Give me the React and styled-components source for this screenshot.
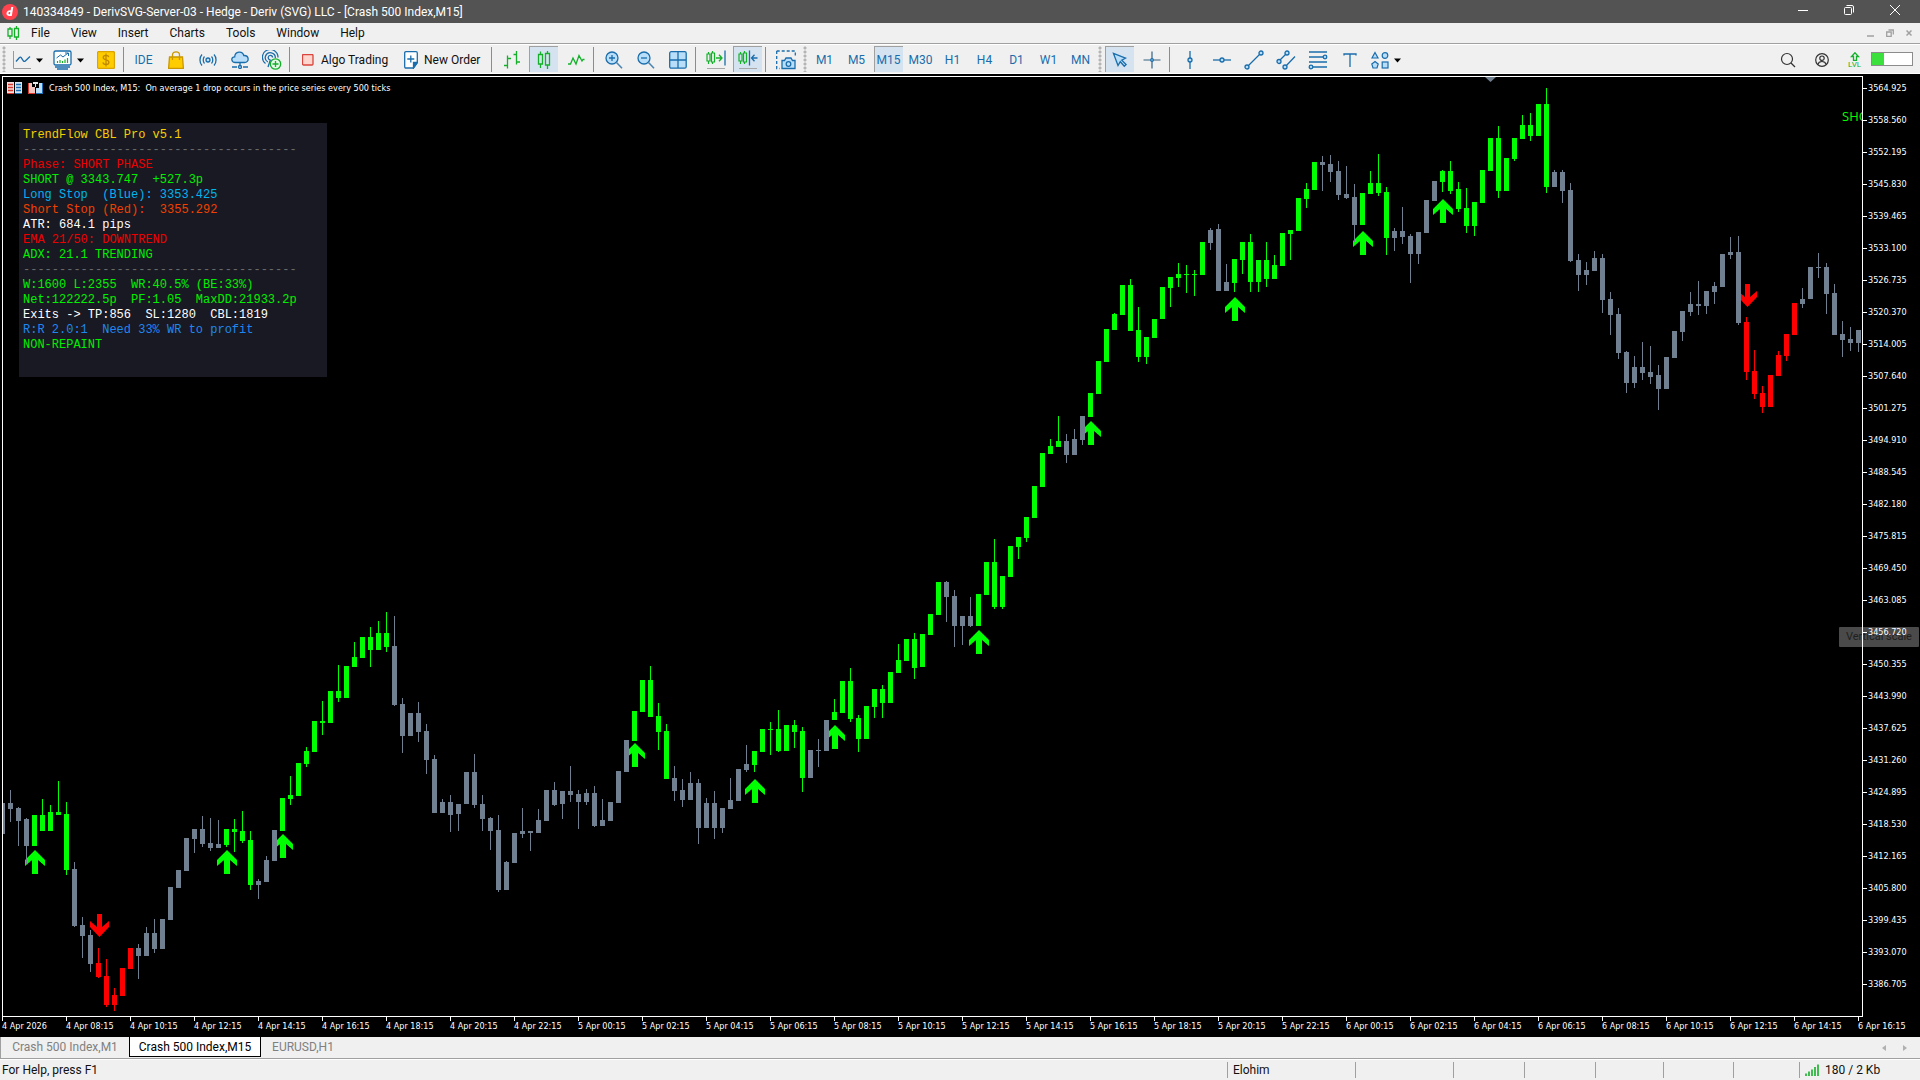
import React from "react";
import styled, { createGlobalStyle } from "styled-components";

const UI_FONT = 'Roboto, "Open Sans", sans-serif';
const CHART_FONT = '"DejaVu Sans Condensed", "DejaVu Sans", sans-serif';
const MONO_FONT = '"Liberation Mono", monospace';

const UP = "#00ff00";
const DOWN = "#ff0000";
const FLAT = "#708090";
const BLUE = "#1a6dab";
const SKY = "#b9defa";
const GREEN = "#14b02a";

const GlobalStyle = createGlobalStyle`
  * { box-sizing: border-box; }
  body { margin: 0; background: #f0f0f0; font-family: ${UI_FONT}; font-size: 12px; overflow: hidden; }
  button { font: inherit; color: inherit; background: none; border: 0; padding: 0; margin: 0; }
`;

/* ---------- layout ---------- */

const Window = styled.div`
  display: flex;
  flex-direction: column;
  height: 100vh;
`;

const TitleBar = styled.header`
  display: flex;
  align-items: center;
  height: 23px;
  padding: 0 2px;
  gap: 5px;
  background: #535353;
  color: #fff;
`;

const TitleText = styled.span`
  flex: 1;
  white-space: nowrap;
  line-height: 20px;
`;

const WindowControls = styled.div`
  display: flex;
  align-self: flex-start;
`;

const WindowButton = styled.button`
  width: 46px;
  height: 20px;
  display: grid;
  place-items: center;
`;

const MenuBar = styled.nav`
  display: flex;
  align-items: center;
  height: 21px;
  padding: 0 2px 0 6px;
  border-bottom: 1px solid #a0a0a0;
  color: #111;
`;

const MenuItem = styled.button`
  padding: 0 10px 0 11px;
  line-height: 18px;
`;

const ChildControls = styled.div`
  display: flex;
  margin-left: auto;
`;

const ChildButton = styled.button`
  width: 19px;
  height: 18px;
  display: grid;
  place-items: center;
`;

const ToolBar = styled.div`
  display: flex;
  align-items: center;
  height: 30px;
  padding: 0 7px 0 2px;
  gap: 3px;
  border-top: 1px solid #fff;
  border-bottom: 1px solid #fff;
`;

const Grip = styled.span`
  width: 4px;
  height: 26px;
  background: radial-gradient(circle, #b4b4b4 1px, transparent 2px) 0 0 / 4px 4px;
`;

const Separator = styled.span`
  width: 3px;
  height: 25px;
  border-left: 1px solid #8c8c8c;
`;

const Tool = styled.button`
  flex: none;
  display: flex;
  align-items: center;
  justify-content: ${(p) => (p.$width ? "flex-start" : "center")};
  gap: ${(p) => p.$gap || 5}px;
  width: ${(p) => p.$width || 29}px;
  height: 26px;
  padding-top: 2px;
  padding-left: ${(p) => p.$inset || 0}px;
  color: ${(p) => (p.$dark ? "#111" : BLUE)};
  white-space: nowrap;
  background: ${(p) => (p.$active ? "#d5e3f1" : "transparent")};
  box-shadow: ${(p) => (p.$active ? "inset 1px 1px 0 #a0a0a0" : "none")};
`;

const ToolEnd = styled.div`
  display: flex;
  align-items: center;
  margin-left: auto;
`;

const Meter = styled.span`
  width: 42px;
  height: 14px;
  border: 1px solid #8c8c8c;
  background: linear-gradient(90deg, #3ce03c 12px, #fff 12px);
`;

/* ---------- chart ---------- */

const Chart = styled.main`
  position: relative;
  flex: 1;
  min-height: 0;
  display: grid;
  grid-template-columns: minmax(0, 1fr) 57px;
  grid-template-rows: minmax(0, 1fr) 20px;
  padding: 2px 0 0 2px;
  background: #000;
  color: #fff;
  font-family: ${CHART_FONT};
  font-size: 9px;
`;

const Plot = styled.section`
  position: relative;
  overflow: hidden;
  border: 1px solid #fff;
`;

const Series = styled.svg`
  position: absolute;
  inset: 0;
  width: 100%;
  height: 100%;
`;

const PlotHeader = styled.div`
  position: relative;
  display: flex;
  align-items: center;
  gap: 6px;
  height: 22px;
  padding-left: 4px;
  white-space: pre;
`;

const Panel = styled.pre`
  position: relative;
  width: 308px;
  height: 254px;
  margin: 24px 0 0 16px;
  padding: 5px 4px;
  background: #191923;
  font-family: ${MONO_FONT};
  font-size: 12px;
  line-height: 15px;
`;

const PanelLine = styled.div`
  color: ${(p) => p.$color};
`;

const SignalLabel = styled.span`
  position: absolute;
  top: 30px;
  left: calc(100% - 20px);
  color: ${UP};
  font-family: "Open Sans", sans-serif;
  font-size: 13px;
  line-height: 18px;
`;

const PriceAxis = styled.div`
  position: relative;
  z-index: 2;
  display: flex;
  flex-direction: column;
  gap: 8px;
  overflow: hidden;
`;

const Price = styled.div`
  flex: none;
  display: flex;
  align-items: center;
  gap: 1px;
  height: 24px;
  &::before {
    content: "";
    width: 4px;
    height: 1px;
    background: #fff;
  }
`;

const TimeAxis = styled.div`
  grid-column: 1 / -1;
  display: flex;
  overflow: hidden;
`;

const Time = styled.div`
  flex: 0 0 64px;
  line-height: 10px;
  white-space: nowrap;
  &::before {
    content: "";
    display: block;
    width: 1px;
    height: 4px;
    background: #fff;
  }
`;

const ScaleTip = styled.div`
  position: absolute;
  top: 553px;
  right: 1px;
  width: 80px;
  height: 20px;
  border-radius: 1px;
  background: #4a4a4a;
  color: #202020;
  font-family: ${UI_FONT};
  font-size: 11px;
  line-height: 19px;
  text-align: center;
`;

/* ---------- bottom bars ---------- */

const Tabs = styled.div`
  display: flex;
  align-items: flex-start;
  height: 22px;
  padding-right: 5px;
  border-left: 1px solid #a0a0a0;
  border-bottom: 1px solid #a0a0a0;
`;

const Tab = styled.button`
  height: 20px;
  width: ${(p) => p.$width}px;
  line-height: 20px;
  white-space: nowrap;
  color: ${(p) => (p.$active ? "#000" : "#808080")};
  background: ${(p) => (p.$active ? "#fff" : "transparent")};
  border: 1px solid ${(p) => (p.$active ? "#000" : "transparent")};
  border-top: 0;
`;

const TabScroll = styled.div`
  display: flex;
  align-self: center;
  margin-left: auto;
`;

const ScrollButton = styled.button`
  width: 21px;
  display: grid;
  place-items: center;
`;

const StatusBar = styled.footer`
  display: flex;
  align-items: stretch;
  height: 21px;
  padding: 2px 0;
  border-top: 1px solid #fff;
  color: #111;
`;

const StatusCell = styled.div`
  flex: ${(p) => (p.$width ? `0 0 ${p.$width}px` : "1")};
  display: flex;
  align-items: center;
  gap: 6px;
  padding-left: ${(p) => (p.$width ? 5 : 2)}px;
  border-left: ${(p) => (p.$width ? "1px solid #a0a0a0" : "0")};
  line-height: 16px;
  white-space: nowrap;
`;

/* ---------- icons ---------- */

const Icon = ({ w = 20, h = 20, children, ...rest }) => (
  <svg width={w} height={h} viewBox={`0 0 ${w} ${h}`} fill="none" stroke={BLUE} strokeWidth="1.3" aria-hidden="true" {...rest}>
    {children}
  </svg>
);

const Caret = () => (
  <Icon w={7} h={5} stroke="none">
    <path d="M0 0.5h7L3.5 4.5z" fill="#000" />
  </Icon>
);

const LogoIcon = () => (
  <Icon w={16} h={16} stroke="none">
    <circle cx="8" cy="8" r="8" fill="#ff444f" />
    <path d="M9.2 3h2.1l-1.5 9H7.3C5.3 12 4.2 10.800 4.500 9.100 4.800 7.200 6.200 6.200 8 6.200h.7zM8.300 8H7.600c-.7 0-1.100.400-1.200 1.100-.1.700.2 1.100.9 1.100H8z" fill="#fff" fillRule="evenodd" />
  </Icon>
);

const CandlesIcon = () => (
  <Icon w={14} h={18} stroke={GREEN}>
    <path d="M3.500 0.500v3M3.500 13v4M10.500 0v2.500M10.500 14v4M1.500 3.500h4v9.500h-4zM8.500 2.500h4V14h-4z" />
  </Icon>
);

const SmallCandlesIcon = () => (
  <Icon w={14} h={14} stroke={GREEN}>
    <path d="M4 1v2M4 10v3M10.500 0v2.500M10.500 11v3M2 3h4v7H2zM8.500 2.500h4V11h-4z" />
  </Icon>
);

const LineChartIcon = () => (
  <Icon w={18} h={18}>
    <path d="M0.500 0v17.500H18" stroke="#999" strokeWidth="1" />
    <path d="M3 10.500l3.500-4c.7-.7 1.200-.5 1.700.2l2.300 3.300c.5.600 1.200.600 1.800 0l4.700-4.500" />
  </Icon>
);

const TemplateIcon = () => (
  <Icon w={20} h={20}>
    <rect x="1" y="1" width="17" height="14" rx="1.500" fill="#fff" />
    <path d="M3.500 8l4-3 2.500 2 5-4M12 3h3.500v3" strokeWidth="1" />
    <path d="M4.500 13v-2M7 13v-3M9.500 13v-2M12 13v-3.500M14.500 13v-5" stroke={GREEN} strokeWidth="1.200" />
    <path d="M2 17h15M4 19h11" strokeWidth="1.500" />
  </Icon>
);

const DollarIcon = () => (
  <Icon w={18} h={18} stroke="#c08a00">
    <rect x="0.500" y="0.500" width="17" height="17" rx="1.500" fill="#ffcc00" stroke="#dba400" />
    <path d="M11.800 6c-.3-1.200-1.400-1.700-2.800-1.700-1.600 0-2.800.8-2.800 2.200 0 3.200 5.700 1.500 5.700 4.700 0 1.500-1.300 2.300-2.900 2.300-1.600 0-2.800-.7-3-2.100M9 2.500v13" />
  </Icon>
);

const BagIcon = () => (
  <Icon w={16} h={18} stroke="#c99700">
    <path d="M1.500 6h13l.9 11.500H.6z" fill="#ffcc00" />
    <path d="M4.500 9V3.800c0-4 7-4 7 0V9" />
  </Icon>
);

const SignalIcon = () => (
  <Icon w={18} h={12}>
    <circle cx="9" cy="6" r="2" fill={SKY} />
    <path d="M5.500 2.500c-1.700 1.800-1.700 5.200 0 7M12.500 2.500c1.700 1.800 1.700 5.200 0 7M3 .5c-2.700 2.800-2.700 8.200 0 11M15 .5c2.700 2.800 2.700 8.200 0 11" />
  </Icon>
);

const CloudIcon = () => (
  <Icon w={18} h={18}>
    <path d="M4.500 11.500c-4.500 0-5-5.500-.8-5.700C4 0 11.500-.500 12.800 4.500c5.500-.3 5.800 7 .7 7z" fill={SKY} />
    <path d="M9 11.500V15M1 16h5M12 16h5" />
    <circle cx="9" cy="16" r="1.500" fill={SKY} />
  </Icon>
);

const HostingIcon = () => (
  <Icon w={20} h={20}>
    <path d="M3.500 13.500A7.800 7.800 0 1 1 16 7.500M5.800 12a5 5 0 1 1 7.500-4M8 9.800a2.200 2.200 0 1 1 2.600-2.300M8.500 9.500L6 17" />
    <circle cx="13.500" cy="14" r="5.200" fill="#e6fae8" stroke={GREEN} />
    <path d="M13.500 11v6M10.500 14h6" stroke={GREEN} />
  </Icon>
);

const StopIcon = () => (
  <Icon w={12} h={12} stroke="#d9443c">
    <rect x="0.500" y="0.500" width="10.500" height="10.500" rx="1" fill="#fdd6cf" />
  </Icon>
);

const NewOrderIcon = () => (
  <Icon w={14} h={18}>
    <path d="M2 .7h10q1.300 0 1.300 1.300v9.500l-4 5.500H2Q.7 17 .7 15.700V2Q.7.7 2 .7z" fill="#fff" />
    <path d="M13.300 11.500H9.500v5.500z" fill={BLUE} />
    <path d="M6.800 4.500v7M3.300 8h7" />
  </Icon>
);

const BarsIcon = () => (
  <Icon w={18} h={18} stroke={GREEN}>
    <path d="M4.500 4.500v13M1 14.500h3.500M4.500 7.500H8M13.500 0v13.500M10.500 3.500h3M13.500 11H17" />
  </Icon>
);

const ZigzagIcon = () => (
  <Icon w={18} h={12} stroke={GREEN}>
    <path d="M1 10h2.500L6 4l3 6 3-8.500L15 7l1-1.500h1.500" />
  </Icon>
);

const ZoomIcon = ({ plus }) => (
  <Icon w={18} h={18}>
    <circle cx="7" cy="7" r="6" fill={SKY} />
    <path d={plus ? "M4 7h6M7 4v6" : "M4 7h6"} />
    <path d="M11.300 11.300L17 17.300" stroke="#4f86b0" strokeWidth="1.600" />
  </Icon>
);

const GridIcon = () => (
  <Icon w={18} h={18}>
    <rect x="0.700" y="0.700" width="16.500" height="16.500" rx="1.500" fill={SKY} />
    <path d="M9 1v16M1 9h16" />
  </Icon>
);

const ShiftIcon = ({ back }) => (
  <Icon w={20} h={20}>
    <path d="M2.500 2v2M2.500 11v3M6.500 1v2M6.500 12v2M1 4h3v7H1zM5.500 3h3v9h-3z" stroke={GREEN} strokeWidth="1.200" />
    {back ? (
      <path d="M11.500 0.500v15M19.500 8H13.500M16.500 4.800L13.500 8l3 3.200" />
    ) : (
      <>
        <path d="M10 8h6M13 4.800L16 8l-3 3.200" stroke={GREEN} />
        <path d="M19 0.500v15" />
      </>
    )}
    <path d="M1 18.500h18" stroke="#a8a8a8" strokeWidth="1" />
  </Icon>
);

const CameraIcon = () => (
  <Icon w={20} h={20}>
    <path d="M.7 1h18.600v6M.7 1v17.500h3" strokeDasharray="3 2" />
    <path d="M6 18.500v-8h2.500l1.500-2.500h5l1.500 2.500h2.500v8z" fill={SKY} />
    <circle cx="12.500" cy="14" r="2.300" />
  </Icon>
);

const CursorIcon = () => (
  <Icon w={16} h={16}>
    <path d="M1.500 1.500l4.500 12 2.300-3.800 4 4.500 1.800-1.700-4.300-4.300 3.700-2z" fill={SKY} />
  </Icon>
);

const CrosshairIcon = () => (
  <Icon w={18} h={18}>
    <path d="M9 .500v17M.500 9h17" stroke="#35617f" strokeWidth="1.200" />
    <circle cx="9" cy="9" r="1.300" fill={SKY} />
  </Icon>
);

const VLineIcon = () => (
  <Icon w={18} h={18}>
    <path d="M9 0v18" />
    <circle cx="9" cy="9" r="2" fill={SKY} />
  </Icon>
);

const HLineIcon = () => (
  <Icon w={18} h={18}>
    <path d="M0 9h18" />
    <circle cx="9" cy="9" r="2" fill={SKY} />
  </Icon>
);

const TrendIcon = () => (
  <Icon w={20} h={20}>
    <path d="M3 17L17 3" />
    <circle cx="3" cy="17" r="2" fill={SKY} />
    <circle cx="17" cy="3" r="2" fill={SKY} />
  </Icon>
);

const ChannelIcon = () => (
  <Icon w={20} h={20}>
    <path d="M3 11l8-8M9 17L19 6.500" />
    <circle cx="3" cy="11.500" r="2" fill={SKY} />
    <circle cx="11" cy="3" r="2" fill={SKY} />
    <circle cx="9" cy="17" r="2" fill={SKY} />
  </Icon>
);

const FiboIcon = () => (
  <Icon w={20} h={20}>
    <path d="M1 2h18M1 7h14M1 12h18M5 17h14" />
    <circle cx="17" cy="7" r="1.800" fill={SKY} />
    <circle cx="3" cy="17" r="1.800" fill={SKY} />
  </Icon>
);

const TextIcon = () => (
  <Icon w={14} h={14}>
    <path d="M1 2.500V1h12v1.500M7 1v13" />
  </Icon>
);

const ShapesIcon = () => (
  <Icon w={18} h={18} strokeWidth="1.200">
    <path d="M4 1.500L7 7H1z" fill={SKY} />
    <circle cx="14" cy="4.500" r="2.800" fill={SKY} />
    <path d="M4 10.500l3.200 2.500-1.200 4H2l-1.200-4z" fill={SKY} />
    <rect x="11.200" y="11" width="5.800" height="6" fill={SKY} />
  </Icon>
);

const SearchIcon = () => (
  <Icon w={16} h={16} stroke="#333" strokeWidth="1.200">
    <circle cx="7" cy="7" r="5.500" />
    <path d="M11 11l4 4" />
  </Icon>
);

const UserIcon = () => (
  <Icon w={14} h={14} stroke="#333" strokeWidth="1.200">
    <circle cx="7" cy="7" r="6.300" />
    <circle cx="7" cy="5.200" r="2.200" />
    <path d="M3 11.500c.5-2.500 2-3 4-3s3.500.500 4 3" />
  </Icon>
);

const LevelArrow = () => (
  <Icon w={10} h={9} stroke={GREEN}>
    <path d="M5 .8L1.500 4.500h2v4h3v-4h2z" />
  </Icon>
);

const LevelStack = styled.span`
  display: flex;
  flex-direction: column;
  align-items: center;
  color: ${GREEN};
  font-size: 8px;
  line-height: 8px;
`;

const BarsSignal = () => (
  <Icon w={14} h={12} stroke={GREEN} strokeWidth="1.600">
    <path d="M1 12V9.500M4 12V7.500M7 12V5.500M10 12V3M13 12V0.500" />
  </Icon>
);

const BookIcon = () => (
  <Icon w={15} h={12} stroke="none">
    <path d="M0 0h7v11H0z" fill="#f6dcda" />
    <path d="M8 0h7v11H8z" fill="#d5e6f4" />
    <path d="M1 2.500h5M1 5.500h5M1 8.500h5" stroke="#d8392f" />
    <path d="M9 2.500h5M9 5.500h5M9 8.500h5" stroke="#1c6fb5" />
    <path d="M0 11h7v1H0z" fill="#d8392f" />
    <path d="M8 11h7v1H8z" fill="#1c6fb5" />
  </Icon>
);

const TradeIcon = () => (
  <Icon w={15} h={12} stroke="none">
    <path d="M0 1h4v4h3v7H0z" fill="#f6c4bf" />
    <path d="M0 1h1v11H0zM0 11h7v1H0z" fill="#d8392f" />
    <path d="M5 0h5v2H8v3H7V2H5z" fill="#e8e8e8" />
    <path d="M11 1h4v11H8V6h3z" fill="#b9defa" />
    <path d="M14 1h1v11h-1zM8 11h7v1H8z" fill="#1c6fb5" />
  </Icon>
);

/* ---------- data ---------- */

/* Colour runs: each entry is the index of the first candle that takes the colour. */
const COLOR_RUNS = [
  [0, FLAT], [4, UP], [9, FLAT], [12, DOWN], [17, FLAT], [28, UP], [32, FLAT], [35, UP], [49, FLAT],
  [79, UP], [84, FLAT], [94, UP], [101, FLAT], [104, UP], [118, FLAT], [122, UP], [133, FLAT],
  [136, UP], [151, FLAT], [154, UP], [165, FLAT], [170, UP], [174, FLAT], [180, UP], [194, FLAT],
  [218, DOWN], [225, FLAT],
];

/* high, body top, body bottom, low */
const CANDLES = `803,803,834,834 790,803,809,822 807,808,821,846 818,819,846,864 815,815,846,846 799,815,831,831
805,812,831,831 781,812,815,815 802,814,870,875 862,869,926,927 917,925,936,958 930,935,964,972
948,963,977,978 959,976,1005,1007 988,995,1005,1011 968,968,996,996 948,948,969,969 944,948,956,979
927,933,956,956 919,933,949,953 919,919,949,949 887,887,920,920 870,870,888,888 838,838,871,871
829,829,839,853 816,829,844,847 818,843,848,851 820,844,848,848 829,829,845,847 819,829,832,852
811,831,841,843 831,840,885,890 879,881,885,899 856,860,882,882 830,830,861,861 798,798,831,831
776,795,799,805 763,763,796,796 747,751,764,767 721,721,752,752 701,721,723,735 691,691,723,723
665,691,698,702 666,666,698,698 642,657,667,667 637,637,658,658 627,637,650,667 621,633,650,650
612,633,647,652 616,646,705,706 698,704,736,753 713,713,736,736 702,713,732,742 724,731,760,774
755,759,813,813 799,802,813,813 795,802,815,832 804,804,814,831 772,772,804,804 754,772,805,808
795,804,819,831 817,818,831,850 815,830,890,892 861,862,890,890 833,833,863,863 808,831,834,838
831,831,833,851 809,820,833,833 790,790,821,821 782,790,805,806 791,791,804,819 766,791,795,802
790,794,802,829 789,793,802,805 786,793,826,827 799,820,826,826 802,802,821,821 771,771,803,803
740,740,772,772 711,711,741,741 680,680,712,712 666,680,717,717 703,716,732,750 724,731,779,779
766,778,791,801 779,790,800,807 772,783,800,800 779,783,828,844 798,803,828,828 791,803,828,839
808,808,828,833 778,800,809,809 769,769,801,801 745,764,770,772 751,751,765,772 729,729,752,752
722,729,730,755 710,729,751,752 725,725,751,751 720,725,732,748 727,731,778,792 750,750,778,778
739,750,751,767 720,720,751,751 699,712,720,720 681,681,713,713 668,681,719,722 715,718,739,752
706,706,739,739 689,689,707,718 685,689,703,718 672,672,703,703 644,660,673,673 639,639,661,661
633,639,668,679 634,634,667,667 614,614,635,635 582,582,615,615 581,582,597,622 590,596,626,647
616,616,626,645 597,616,626,627 594,594,626,626 562,562,595,595 539,562,607,609 576,576,607,609
546,546,577,577 537,537,547,559 517,517,538,542 486,486,518,518 453,453,487,487 439,446,454,454
416,441,447,447 434,441,455,463 429,439,455,455 416,416,440,445 393,393,417,417 361,361,394,394
329,329,362,362 313,314,330,330 285,285,315,315 279,285,331,331 307,330,357,362 337,337,357,364
319,319,338,338 287,287,319,319 277,277,288,307 263,274,278,287 265,274,275,293 270,274,275,296
242,242,275,275 228,230,243,250 224,229,291,291 264,282,291,291 259,259,283,292 242,242,260,274
234,242,282,292 260,260,282,292 242,260,279,287 255,265,279,279 233,233,266,266 230,230,234,260
198,198,231,231 183,189,199,208 162,162,190,190 156,162,165,191 155,164,172,182 161,171,195,200
166,194,198,199 184,197,225,242 193,193,225,225 171,183,194,194 154,183,193,196 187,192,238,255
228,231,238,251 207,231,237,244 234,236,254,283 232,232,254,264 200,200,233,233 181,181,201,201
170,171,182,192 161,171,191,194 182,189,209,212 188,208,226,233 202,202,226,236 170,170,203,203
138,138,171,171 126,138,191,198 158,158,191,191 138,138,159,161 115,125,139,139 113,125,136,141
104,104,136,136 88,104,187,193 170,172,187,187 170,172,191,203 183,190,261,262 254,260,275,291
262,270,275,285 251,258,271,271 254,258,300,313 292,299,315,335 308,314,353,359 351,352,383,393
356,367,383,388 342,367,373,380 346,372,377,384 365,375,389,410 357,357,389,389 331,331,358,358
311,311,332,341 292,304,312,316 281,304,306,315 291,291,306,314 282,286,292,304 254,254,287,287
237,252,255,259 236,252,323,325 317,322,372,380 350,371,394,399 386,393,407,413 375,375,407,407
351,355,376,376 334,334,356,361 303,303,335,335 288,299,304,308 267,267,299,299 253,267,268,278
263,267,294,314 284,293,335,335 321,334,340,357 327,339,343,351 330,330,343,352`
  .split(/\s+/)
  .map((row) => row.split(",").map(Number));

/* candle index, tip or top of the arrow */
const BUY_ARROWS = [
  [4, 850], [28, 850], [35, 834], [79, 743], [94, 779], [104, 725], [122, 630], [136, 421],
  [154, 297], [170, 231], [180, 199],
];
const SELL_ARROWS = [[12, 914], [218, 284]];

const colorAt = (i) => COLOR_RUNS.reduce((c, [start, color]) => (i >= start ? color : c), FLAT);

const PRICES = Array.from({ length: 29 }, (_, i) => (3564.925 - i * 6.365).toFixed(3));

const TIMES = [
  "4 Apr 2026", "4 Apr 08:15", "4 Apr 10:15", "4 Apr 12:15", "4 Apr 14:15", "4 Apr 16:15", "4 Apr 18:15",
  "4 Apr 20:15", "4 Apr 22:15", "5 Apr 00:15", "5 Apr 02:15", "5 Apr 04:15", "5 Apr 06:15", "5 Apr 08:15",
  "5 Apr 10:15", "5 Apr 12:15", "5 Apr 14:15", "5 Apr 16:15", "5 Apr 18:15", "5 Apr 20:15", "5 Apr 22:15",
  "6 Apr 00:15", "6 Apr 02:15", "6 Apr 04:15", "6 Apr 06:15", "6 Apr 08:15", "6 Apr 10:15", "6 Apr 12:15",
  "6 Apr 14:15", "6 Apr 16:15",
];

const RULE = "-".repeat(38);
const PANEL_LINES = [
  ["TrendFlow CBL Pro v5.1", "#f5cf00"],
  [RULE, "#696969"],
  ["Phase: SHORT PHASE", "#ee0000"],
  ["SHORT @ 3343.747  +527.3p", "#00f000"],
  ["Long Stop  (Blue): 3353.425", "#00b4f0"],
  ["Short Stop (Red):  3355.292", "#f04100"],
  ["ATR: 684.1 pips", "#ffffff"],
  ["EMA 21/50: DOWNTREND", "#ee0000"],
  ["ADX: 21.1 TRENDING", "#00f000"],
  [RULE, "#696969"],
  ["W:1600 L:2355  WR:40.5% (BE:33%)", "#00f000"],
  ["Net:122222.5p  PF:1.05  MaxDD:21933.2p", "#00f000"],
  ["Exits -> TP:856  SL:1280  CBL:1819", "#ffffff"],
  ["R:R 2.0:1  Need 33% WR to profit", "#1e88f0"],
  ["NON-REPAINT", "#00f000"],
];

const MENUS = ["File", "View", "Insert", "Charts", "Tools", "Window", "Help"];
const PERIODS = ["M1", "M5", "M15", "M30", "H1", "H4", "D1", "W1", "MN"];
const STATUS_WIDTHS = [98, 71, 71, 68, 70, 66];

/* ---------- parts ---------- */

function Candles() {
  return (
    <Series aria-label="Price candles" role="img">
      <g transform="translate(-3 -77)">
        <path d="M1485 77h11l-5.500 5z" fill={FLAT} />
        {BUY_ARROWS.map(([i, y]) => (
          <path key={i} fill={UP} transform={`translate(${i * 8 - 7} ${y})`} d="M10 0L20 10V16L13 10V24H7V10L0 16V10Z" />
        ))}
        {SELL_ARROWS.map(([i, y]) => (
          <path key={i} fill={DOWN} transform={`translate(${i * 8 - 6} ${y})`} d="M7 0H12V13L19 7V13L9.500 23L0 13V7L7 13Z" />
        ))}
        {CANDLES.map(([high, top, bottom, low], i) => (
          <g key={i} fill={colorAt(i)} shapeRendering="crispEdges">
            <rect x={i * 8 + 2} y={high} width="1" height={low - high} />
            <rect x={i * 8} y={top} width="5" height={bottom - top} />
          </g>
        ))}
      </g>
    </Series>
  );
}

function Tools() {
  return (
    <ToolBar role="toolbar">
      <Grip />
      <Tool $width={38} $inset={4} aria-label="Charts"><LineChartIcon /><Caret /></Tool>
      <Tool $width={38} $inset={3} $gap={4} aria-label="Templates"><TemplateIcon /><Caret /></Tool>
      <Tool aria-label="Symbols"><DollarIcon /></Tool>
      <Separator />
      <Tool>IDE</Tool>
      <Tool aria-label="Market"><BagIcon /></Tool>
      <Tool aria-label="Signals"><SignalIcon /></Tool>
      <Tool aria-label="Cloud"><CloudIcon /></Tool>
      <Tool aria-label="Hosting"><HostingIcon /></Tool>
      <Separator />
      <Tool $dark $width={99} $inset={7} $gap={7}><StopIcon />Algo Trading</Tool>
      <Tool $dark $width={91} $inset={7} $gap={6}><NewOrderIcon />New Order</Tool>
      <Separator />
      <Tool aria-label="Bars"><BarsIcon /></Tool>
      <Tool $active aria-label="Candles"><CandlesIcon /></Tool>
      <Tool aria-label="Line"><ZigzagIcon /></Tool>
      <Separator />
      <Tool aria-label="Zoom in"><ZoomIcon plus /></Tool>
      <Tool aria-label="Zoom out"><ZoomIcon /></Tool>
      <Tool aria-label="Tile windows"><GridIcon /></Tool>
      <Separator />
      <Tool aria-label="Auto scroll"><ShiftIcon /></Tool>
      <Tool $active aria-label="Chart shift"><ShiftIcon back /></Tool>
      <Separator />
      <Tool aria-label="Screenshot"><CameraIcon /></Tool>
      <Grip />
      {PERIODS.map((p) => (
        <Tool key={p} $active={p === "M15"}>{p}</Tool>
      ))}
      <Grip />
      <Tool $active aria-label="Cursor"><CursorIcon /></Tool>
      <Tool aria-label="Crosshair"><CrosshairIcon /></Tool>
      <Separator />
      <Tool aria-label="Vertical line"><VLineIcon /></Tool>
      <Tool aria-label="Horizontal line"><HLineIcon /></Tool>
      <Tool aria-label="Trend line"><TrendIcon /></Tool>
      <Tool aria-label="Channel"><ChannelIcon /></Tool>
      <Tool aria-label="Fibonacci"><FiboIcon /></Tool>
      <Tool aria-label="Text"><TextIcon /></Tool>
      <Tool $width={38} $inset={4} aria-label="Shapes"><ShapesIcon /><Caret /></Tool>
      <ToolEnd>
        <Tool $width={33} $inset={8} aria-label="Search"><SearchIcon /></Tool>
        <Tool $width={33} $inset={10} aria-label="Account"><UserIcon /></Tool>
        <Tool $width={33} $inset={10}><LevelStack><LevelArrow />LVL</LevelStack></Tool>
        <Meter />
      </ToolEnd>
    </ToolBar>
  );
}

export default function App() {
  return (
    <Window>
      <GlobalStyle />
      <TitleBar>
        <LogoIcon />
        <TitleText>140334849 - DerivSVG-Server-03 - Hedge - Deriv (SVG) LLC - [Crash 500 Index,M15]</TitleText>
        <WindowControls>
          <WindowButton aria-label="Minimize">
            <Icon w={10} h={10} stroke="#fff" strokeWidth="1"><path d="M0 5.500h10" /></Icon>
          </WindowButton>
          <WindowButton aria-label="Restore">
            <Icon w={10} h={10} stroke="#fff" strokeWidth="1">
              <rect x="0.500" y="2.500" width="7" height="7" rx="1" />
              <path d="M2.500.5H8q1.500 0 1.500 1.500v5.500" />
            </Icon>
          </WindowButton>
          <WindowButton aria-label="Close">
            <Icon w={10} h={10} stroke="#fff" strokeWidth="1"><path d="M0 0l10 10M10 0L0 10" /></Icon>
          </WindowButton>
        </WindowControls>
      </TitleBar>
      <MenuBar>
        <SmallCandlesIcon />
        {MENUS.map((m) => (
          <MenuItem key={m}>{m}</MenuItem>
        ))}
        <ChildControls>
          <ChildButton aria-label="Minimize chart">
            <Icon w={7} h={7} stroke="#a0a0a0" strokeWidth="1.500"><path d="M0 6h7" /></Icon>
          </ChildButton>
          <ChildButton aria-label="Restore chart">
            <Icon w={8} h={8} stroke="#a0a0a0"><path d="M.7 3h4.500v4.300H.7zM2.500 1h4.800v4.500" /></Icon>
          </ChildButton>
          <ChildButton aria-label="Close chart">
            <Icon w={6} h={6} stroke="#a0a0a0" strokeWidth="1.500"><path d="M.5.5l5 5M5.500.5l-5 5" /></Icon>
          </ChildButton>
        </ChildControls>
      </MenuBar>
      <Tools />
      <Chart>
        <ScaleTip role="tooltip">Vertical scale</ScaleTip>
        <Plot>
          <Candles />
          <PlotHeader>
            <BookIcon />
            <TradeIcon />
            <span>{"Crash 500 Index, M15:  On average 1 drop occurs in the price series every 500 ticks"}</span>
          </PlotHeader>
          <Panel>
            {PANEL_LINES.map(([text, color], i) => (
              <PanelLine key={i} $color={color}>{text}</PanelLine>
            ))}
          </Panel>
          <SignalLabel>SHO</SignalLabel>
        </Plot>
        <PriceAxis>
          {PRICES.map((p) => (
            <Price key={p}>{p}</Price>
          ))}
        </PriceAxis>
        <TimeAxis>
          {TIMES.map((t) => (
            <Time key={t}>{t}</Time>
          ))}
        </TimeAxis>
      </Chart>
      <Tabs role="tablist">
        <Tab role="tab" $width={128}>Crash 500 Index,M1</Tab>
        <Tab role="tab" $width={132} $active aria-selected="true">Crash 500 Index,M15</Tab>
        <Tab role="tab" $width={84}>EURUSD,H1</Tab>
        <TabScroll>
          <ScrollButton aria-label="Previous tab">
            <Icon w={4} h={6} stroke="none"><path d="M4 0v6L0 3z" fill="#b0b0b0" /></Icon>
          </ScrollButton>
          <ScrollButton aria-label="Next tab">
            <Icon w={4} h={6} stroke="none"><path d="M0 0v6l4-3z" fill="#b0b0b0" /></Icon>
          </ScrollButton>
        </TabScroll>
      </Tabs>
      <StatusBar>
        <StatusCell>For Help, press F1</StatusCell>
        <StatusCell $width={128}>Elohim</StatusCell>
        {STATUS_WIDTHS.map((w, i) => (
          <StatusCell key={i} $width={w} />
        ))}
        <StatusCell $width={121}><BarsSignal />180 / 2 Kb</StatusCell>
      </StatusBar>
    </Window>
  );
}
